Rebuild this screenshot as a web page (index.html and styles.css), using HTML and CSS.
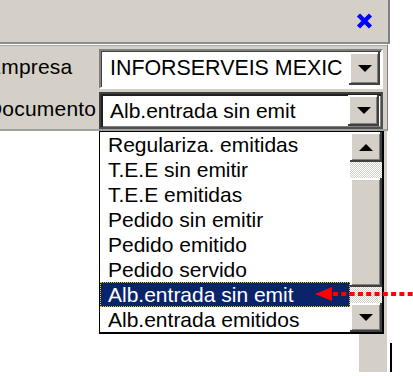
FILE: index.html
```html
<!DOCTYPE html>
<html>
<head>
<meta charset="utf-8">
<link rel="stylesheet" href="styles.css">
</head>
<body>
<div class="window">
  <div class="titlebar">
    <svg class="close" width="17" height="16" viewBox="0 0 17 16"><path d="M2.5 2 L14.5 14 M14.5 2 L2.5 14" stroke="#0000ff" stroke-width="4.5" fill="none"/></svg>
  </div>
  <div class="panel">
    <div class="row">
      <span class="label">Empresa</span>
      <div class="combo">
        <span class="value">INFORSERVEIS MEXIC</span>
        <span class="btn"><i class="tri-down"></i></span>
      </div>
    </div>
    <div class="row">
      <span class="label">Documento</span>
      <div class="combo focused">
        <span class="value">Alb.entrada sin emit</span>
        <span class="btn"><i class="tri-down"></i></span>
      </div>
    </div>
  </div>
  <div class="content">
    <div class="formscroll"></div>
    <div class="edge"></div>
  </div>

  <div class="dropdown">
    <ul class="items">
      <li>Regulariza. emitidas</li>
      <li>T.E.E sin emitir</li>
      <li>T.E.E emitidas</li>
      <li>Pedido sin emitir</li>
      <li>Pedido emitido</li>
      <li>Pedido servido</li>
      <li class="selected">Alb.entrada sin emit</li>
      <li>Alb.entrada emitidos</li>
    </ul>
    <div class="sb">
      <span class="sbbtn up"><i class="tri-up"></i></span>
      <span class="track small"></span>
      <span class="thumb"></span>
      <span class="track small"></span>
      <span class="sbbtn down"><i class="tri-down"></i></span>
    </div>
  </div>

  <svg class="pointer" width="100" height="18" viewBox="0 0 100 18">
    <polygon points="2,9 19,2 19,16" fill="#ff0000"/>
    <line x1="20" y1="9" x2="100" y2="9" stroke="#ff0000" stroke-width="4" stroke-dasharray="5 3.3"/>
  </svg>
</div>
</body>
</html>
```

FILE: styles.css
```css
* { box-sizing: border-box; }
html, body { margin: 0; padding: 0; }
body {
  width: 413px;
  height: 376px;
  overflow: hidden;
  background: #ffffff;
  font-family: "Liberation Sans", Arial, sans-serif;
  font-size: 21px;
  color: #000;
}
.window {
  position: relative;
  width: 392px;
  height: 376px;
  display: flex;
  flex-direction: column;
}
.titlebar {
  width: 390px;
  height: 44px;
  flex: none;
  background: #d4d0c8;
  border-right: 2px solid #808080;
  border-bottom: 2px solid #8c8c8c;
  display: flex;
  align-items: center;
  justify-content: flex-end;
  padding-right: 15px;
  padding-bottom: 1px;
}
.close { display: block; }
.panel {
  width: 388px;
  flex: none;
  background: #d4d0c8;
  border-top: 1px solid #ffffff;
  box-shadow: inset 0 1px #a8a8a8;
  border-right: 1px solid #808080;
  border-bottom: 2px solid #a0a0a0;
  padding: 4px 4px 0 0;
  display: flex;
  flex-direction: column;
  gap: 3px;
}
.row {
  display: flex;
  align-items: center;
  margin-left: -13px;
}
.label {
  width: 112px;
  flex: none;
  white-space: nowrap;
  overflow: hidden;
  line-height: 24px;
  letter-spacing: 0.2px;
  position: relative;
  top: -2px;
}
.combo {
  width: 284px;
  height: 40px;
  flex: none;
  background: #ffffff;
  border: 2px solid;
  border-color: #808080 #ffffff #ffffff #808080;
  box-shadow: inset 1px 1px #404040;
  display: flex;
  align-items: stretch;
  padding: 1px 1px 2px 0;
}
.combo.focused {
  height: 37px;
  border-color: #404040 #505050 #505050 #404040;
  box-shadow: inset 2px 2px #202020, inset -1px -1px #808080;
  padding: 1px 2px 1px 0;
}
.value {
  flex: 1;
  padding-left: 9px;
  white-space: nowrap;
  overflow: hidden;
  display: flex;
  align-items: center;
}
.combo:not(.focused) .value { font-size: 21.4px; }
.btn, .sbbtn, .thumb {
  background: #d4d0c8;
  box-shadow: inset -2px -2px #404040, inset 2px 2px #ffffff, inset -3px -3px #808080;
  display: flex;
  align-items: center;
  justify-content: center;
}
.btn { width: 31px; flex: none; }
.tri-down {
  width: 0; height: 0;
  border-left: 7px solid transparent;
  border-right: 7px solid transparent;
  border-top: 7px solid #000;
}
.tri-up {
  width: 0; height: 0;
  border-left: 7px solid transparent;
  border-right: 7px solid transparent;
  border-bottom: 7px solid #000;
}
.content {
  flex: 1;
  display: flex;
  justify-content: flex-end;
  align-items: flex-end;
  padding-bottom: 4px;
}
.formscroll {
  width: 28px;
  height: 100%;
  background: #d4d0c8;
  margin-right: 3px;
}
.edge {
  width: 2px;
  height: 29px;
  background: #000;
}
.dropdown {
  position: absolute;
  left: 99px;
  top: 131px;
  width: 285px;
  height: 203px;
  background: #ffffff;
  border-style: solid;
  border-color: #000;
  border-width: 1px 2px 2px 1px;
  display: flex;
}
.items {
  list-style: none;
  margin: 0;
  padding: 0;
  width: 250px;
  flex: none;
}
.items li {
  height: 25px;
  line-height: 25px;
  padding-left: 8px;
  white-space: nowrap;
}
.items li.selected {
  background: #0a246a;
  color: #ffffff;
  outline: 1px dotted #e2c16a;
  outline-offset: -1px;
}
.sb {
  width: 32px;
  flex: none;
  display: flex;
  flex-direction: column;
}
.sbbtn.up { height: 30px; }
.sbbtn.down { height: 29px; }
.track {
  height: 16px;
  background: repeating-conic-gradient(#d4d0c8 0 25%, #ffffff 0 50%) 0 0 / 2px 2px;
}
.thumb { height: 109px; }
.pointer {
  position: absolute;
  left: 313px;
  top: 285px;
}
```
